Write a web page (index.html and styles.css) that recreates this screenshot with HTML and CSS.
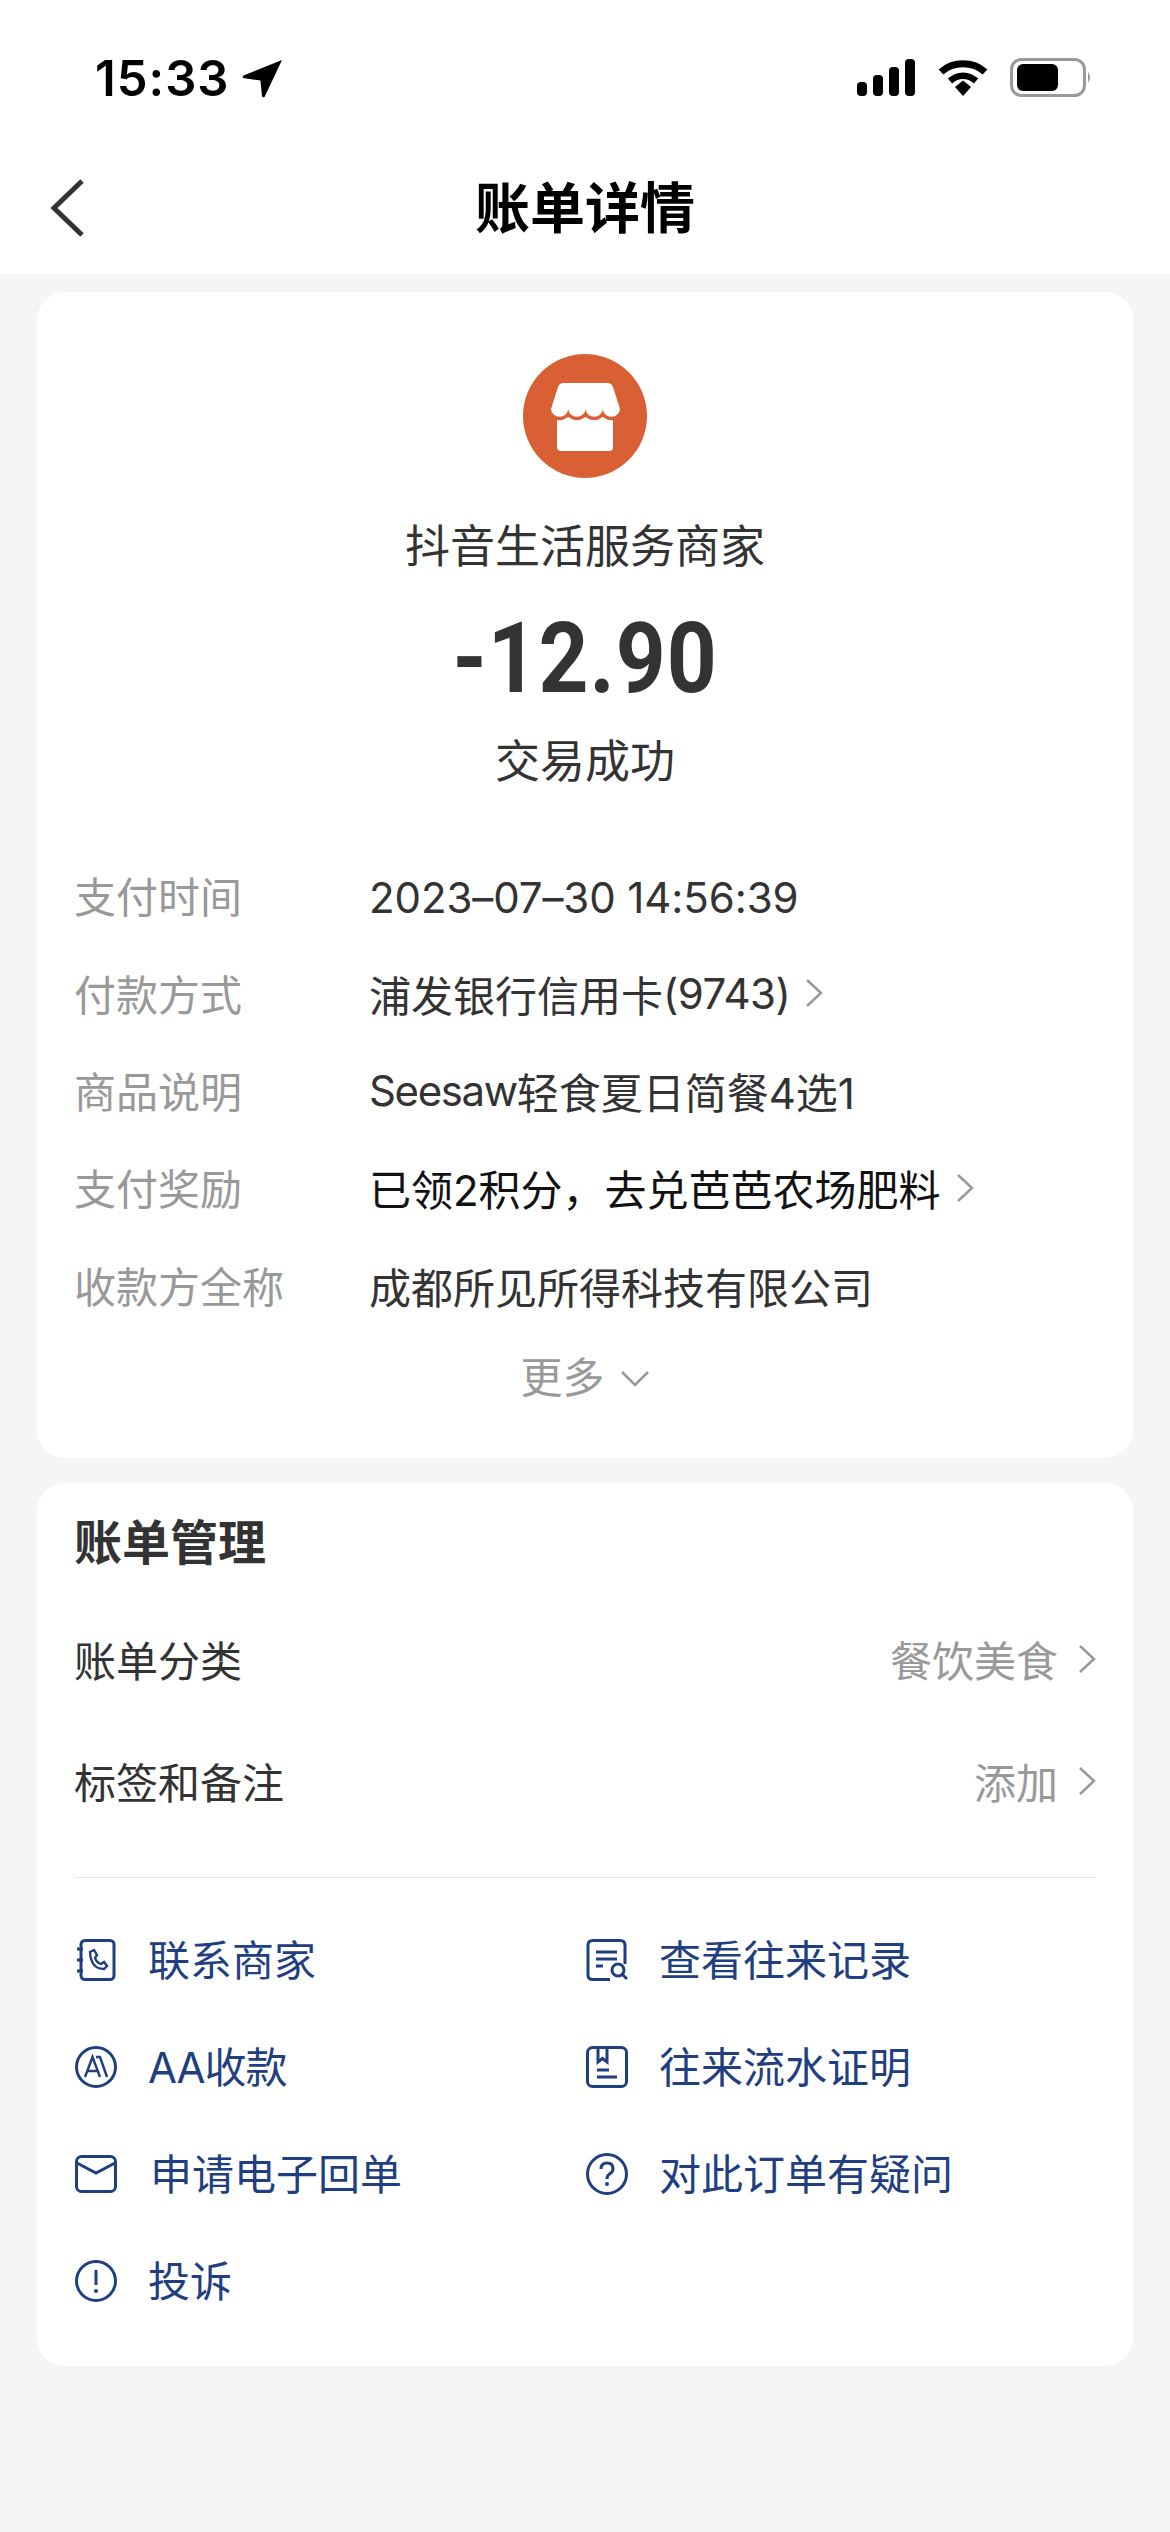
FILE: index.html
```html
<!DOCTYPE html>
<html lang="zh-CN">
<head>
    <meta charset="UTF-8">
    <meta name="viewport" content="width=device-width, initial-scale=1.0">
    <title>账单详情</title>
    <link rel="stylesheet" href="styles.css">
</head>
<body>
    <!-- Status bar and title -->
    <header class="top">
        <div class="status">
            <div class="status-left">
                <span class="clock">15:33</span>
                <svg class="locate" viewBox="0 0 40 38"><path d="M39 1 L22 37 Q20 38 19.500 36 L18 21 L1 18.500 Q0 17 1.500 16 Z" fill="#000"/></svg>
            </div>
            <div class="status-right">
                <svg class="signal" viewBox="0 0 58 37" fill="#000">
                    <rect x="0" y="23" width="10" height="14" rx="4"/>
                    <rect x="16" y="16" width="10" height="21" rx="4"/>
                    <rect x="32" y="8" width="10" height="29" rx="4"/>
                    <rect x="48" y="0" width="10" height="37" rx="4"/>
                </svg>
                <svg class="wifi" viewBox="0 0 50 37" fill="none" stroke="#000">
                    <path d="M3 13 C15 2 35 2 47 13" stroke-width="7"/>
                    <path d="M12 22 C20 15 30 15 38 22" stroke-width="6.500"/>
                    <path d="M17 28 L25 21.500 L33 28 L25 37 Z" fill="#000" stroke="none"/>
                </svg>
                <svg class="battery" viewBox="0 0 82 39">
                    <rect x="1.500" y="1.500" width="73" height="36" rx="10" fill="none" stroke="#999" stroke-width="3"/>
                    <rect x="7" y="6" width="41" height="27" rx="6" fill="#000"/>
                    <path d="M78 14 Q82 19.500 78 25 Z" fill="#999"/>
                </svg>
            </div>
        </div>
        <nav class="nav">
            <svg class="back" viewBox="0 0 34 58"><path d="M32 2 L4 29 L32 56" fill="none" stroke="#333" stroke-width="5"/></svg>
            <h1 class="nav-title">账单详情</h1>
            <span></span>
        </nav>
    </header>

    <main>
        <!-- Transaction summary -->
        <section class="card summary">
            <svg class="logo" viewBox="0 0 124 124">
                <circle cx="62" cy="62" r="62" fill="#d96034"/>
                <rect x="34" y="60" width="56" height="37" rx="4" fill="#fff"/>
                <path d="M28 55 L35 33 Q36.500 29 41 29 H84 Q88.500 29 90 33 L97 55 a8.630 8 0 0 1 -17.250 0 a8.630 8 0 0 1 -17.250 0 a8.630 8 0 0 1 -17.250 0 a8.630 8 0 0 1 -17.250 0 Z" fill="#fff" stroke="#d96034" stroke-width="7" paint-order="stroke"/>
            </svg>
            <div class="merchant">抖音生活服务商家</div>
            <div class="amount">-12.90</div>
            <div class="state">交易成功</div>

            <dl class="details">
                <div class="detail">
                    <dt>支付时间</dt>
                    <dd class="date">2023–07–30 14:56:39</dd>
                </div>
                <div class="detail">
                    <dt>付款方式</dt>
                    <dd>浦发银行信用卡<span class="card-no">(9743)</span><svg class="chev" viewBox="0 0 20 30"><path d="M3 2 L17 15 L3 28"/></svg></dd>
                </div>
                <div class="detail">
                    <dt>商品说明</dt>
                    <dd><span class="brand">Seesaw</span>轻食夏日简餐4选1</dd>
                </div>
                <div class="detail">
                    <dt>支付奖励</dt>
                    <dd class="reward">已领2积分，去兑芭芭农场肥料<svg class="chev" viewBox="0 0 20 30"><path d="M3 2 L17 15 L3 28"/></svg></dd>
                </div>
                <div class="detail">
                    <dt>收款方全称</dt>
                    <dd>成都所见所得科技有限公司</dd>
                </div>
            </dl>
            <div class="more">更多<svg class="chev-down" viewBox="0 0 30 18"><path d="M2 3 L15 16 L28 3"/></svg></div>
        </section>

        <!-- Bill management -->
        <section class="card manage">
            <h2 class="manage-title">账单管理</h2>
            <div class="setting">
                <span>账单分类</span>
                <span class="setting-value">餐饮美食<svg class="chev" viewBox="0 0 20 30"><path d="M3 2 L17 15 L3 28"/></svg></span>
            </div>
            <div class="setting">
                <span>标签和备注</span>
                <span class="setting-value">添加<svg class="chev" viewBox="0 0 20 30"><path d="M3 2 L17 15 L3 28"/></svg></span>
            </div>
            <hr class="divider">
            <div class="links">
                <a class="link">
                    <svg class="icon" viewBox="0 0 42 42">
                        <rect x="6" y="1.500" width="33" height="39" rx="4"/>
                        <path d="M2 10 H8 M2 21 H8 M2 32 H8"/>
                        <path d="M15 13 L19 11 L22 16 L20 19 Q22 24 26 25 L29 23 L32 27 L29 30 Q16 30 15 13 Z" stroke-width="2.400"/>
                    </svg>
                    联系商家
                </a>
                <a class="link">
                    <svg class="icon" viewBox="0 0 42 42">
                        <path d="M39 25 V6 Q39 1.500 34 1.500 H7 Q2 1.500 2 6 V36 Q2 40.500 7 40.500 H24"/>
                        <path d="M10 13 H31 M10 20 H31 M10 27 H17"/>
                        <circle cx="32" cy="31" r="6"/>
                        <path d="M36.500 35.500 L41 40"/>
                    </svg>
                    查看往来记录
                </a>
                <a class="link">
                    <svg class="icon" viewBox="0 0 42 42">
                        <circle cx="21" cy="21" r="19.500"/>
                        <path d="M10 31 L17.500 11 L25 31 M12.500 25 H22.500" stroke-width="2.400"/>
                        <path d="M21 11 H25 L32 31" stroke-width="2.400"/>
                    </svg>
                    <span class="aa">AA收款</span>
                </a>
                <a class="link">
                    <svg class="icon" viewBox="0 0 42 42">
                        <rect x="1.500" y="1.500" width="39" height="39" rx="5"/>
                        <path d="M12 2 V16 L16.500 12.500 L21 16 V2"/>
                        <path d="M11 24 H23 M11 31 H31"/>
                    </svg>
                    往来流水证明
                </a>
                <a class="link">
                    <svg class="icon" viewBox="0 0 42 38">
                        <rect x="1.500" y="1.500" width="39" height="35" rx="5"/>
                        <path d="M2 8 L21 18 L40 8"/>
                    </svg>
                    <span class="link-shift">申请电子回单</span>
                </a>
                <a class="link">
                    <svg class="icon" viewBox="0 0 42 42">
                        <circle cx="21" cy="21" r="19.500"/>
                        <path d="M15 16 Q15 10 21 10 Q27 10 27 15.500 Q27 19 23.500 21 Q21 22.500 21 26"/>
                        <circle class="dot" cx="21" cy="31" r="2"/>
                    </svg>
                    对此订单有疑问
                </a>
                <a class="link">
                    <svg class="icon" viewBox="0 0 42 42">
                        <circle cx="21" cy="21" r="19.500"/>
                        <path d="M21 10 V25"/>
                        <circle class="dot" cx="21" cy="31" r="2"/>
                    </svg>
                    投诉
                </a>
            </div>
        </section>
    </main>
</body>
</html>
```

FILE: styles.css
```css
/* Base Styles */
html, body {
    margin: 0;
    padding: 0;
}

body {
    width: 1170px;
    height: 2532px;
    overflow: hidden;
    background-color: #f5f5f5;
    color: #333;
    font-family: Inter, "Noto Sans CJK SC", sans-serif;
}

/* Status bar and nav */
.top {
    height: 274px;
    background-color: #fff;
}

.status {
    height: 150px;
    display: flex;
    justify-content: space-between;
    align-items: flex-start;
    padding: 0 78px 0 95px;
    box-sizing: border-box;
}

.status-left {
    display: flex;
    align-items: center;
    gap: 12px;
    height: 40px;
    margin-top: 58px;
}

.clock {
    font-size: 49px;
    font-weight: 600;
    letter-spacing: 1px;
    color: #000;
}

.locate {
    width: 41px;
    height: 39px;
}

.status-right {
    display: flex;
    align-items: center;
    margin-top: 58px;
}

.signal {
    width: 58px;
    height: 37px;
    margin-right: 23px;
}

.wifi {
    width: 50px;
    height: 37px;
    margin-right: 22px;
}

.battery {
    width: 82px;
    height: 39px;
}

.nav {
    height: 124px;
    box-sizing: border-box;
    display: grid;
    grid-template-columns: 1fr auto 1fr;
    align-items: center;
    padding: 0 50px 9px;
}

.back {
    width: 34px;
    height: 58px;
}

.nav-title {
    margin: 0;
    font-size: 55px;
    font-weight: 700;
    color: #000;
    line-height: 64px;
}

/* Cards */
.card {
    width: 1096px;
    margin: 0 auto;
    background-color: #fff;
    border-radius: 28px;
    box-sizing: border-box;
}

.summary {
    margin-top: 18px;
    padding: 62px 37px 43px;
    display: flex;
    flex-direction: column;
    align-items: center;
}

.logo {
    width: 124px;
    height: 124px;
}

.merchant {
    margin-top: 39px;
    font-size: 45px;
    line-height: 60px;
}

.amount {
    margin-top: 32px;
    font-family: Roboto, sans-serif;
    font-size: 98px;
    font-weight: 700;
    line-height: 100px;
    letter-spacing: 1px;
    transform: scaleX(0.89);
}

.state {
    margin-top: 23px;
    font-size: 45px;
    line-height: 60px;
}

.details {
    margin: 54px 0 0;
    align-self: stretch;
}

.detail {
    height: 97.4px;
    display: flex;
    align-items: center;
    font-size: 42px;
}

.detail dt {
    width: 295px;
    color: #999;
}

.detail dd {
    margin: 2px 0 0;
    display: flex;
    align-items: center;
}

.detail .date {
    margin-top: 5px;
    letter-spacing: -0.1px;
}

.detail .reward {
    color: #111;
}

.card-no {
    letter-spacing: -0.5px;
}

.brand {
    letter-spacing: -1.4px;
}

.chev {
    width: 20px;
    height: 30px;
    margin-left: 14px;
}

.chev path, .chev-down path {
    fill: none;
    stroke: #999;
    stroke-width: 2.5;
}

.more {
    display: flex;
    align-items: center;
    height: 80px;
    margin-top: 2px;
    font-size: 42px;
    color: #999;
}

.chev-down {
    width: 30px;
    height: 18px;
    margin-left: 15px;
    margin-top: 6px;
}

/* Bill management */
.manage {
    margin-top: 25px;
    padding: 30px 37px 34px;
}

.manage-title {
    margin: 0 0 25px;
    font-size: 48px;
    font-weight: 700;
    line-height: 60px;
}

.setting {
    height: 122px;
    display: flex;
    justify-content: space-between;
    align-items: center;
    font-size: 42px;
}

.setting-value {
    display: flex;
    align-items: center;
    color: #999;
}

.setting .chev {
    margin-left: 19px;
    margin-right: -1px;
}

.divider {
    margin: 35px 0 26px;
    border: 0;
    border-top: 1px solid #e6e6e6;
}

.links {
    display: grid;
    grid-template-columns: 511px 1fr;
    grid-auto-rows: 107px;
}

.link {
    display: flex;
    align-items: center;
    gap: 31px;
    font-size: 42px;
    color: #1f3f80;
}

.link-shift {
    margin-left: 2px;
}

.aa {
    letter-spacing: -1px;
}

.icon {
    width: 42px;
    height: 42px;
    margin: 5px 0 0 1px;
    fill: none;
    stroke: #1f3f80;
    stroke-width: 3;
}

.icon .dot {
    fill: #1f3f80;
    stroke: none;
}
```
